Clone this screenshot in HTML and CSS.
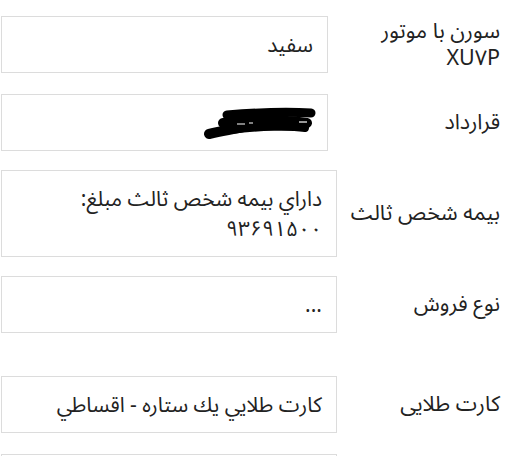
FILE: index.html
```html
<!DOCTYPE html>
<html lang="fa" dir="rtl">
<head>
<meta charset="utf-8">
<link rel="stylesheet" href="styles.css">
</head>
<body>
<div class="list">
  <div class="row">
    <div class="label">سورن با موتور<br>XU۷P</div>
    <div class="box narrow">سفید</div>
  </div>
  <div class="row gap-m">
    <div class="label">قرارداد</div>
    <div class="box narrow">
      <svg class="scribble" width="116" height="36" viewBox="0 0 116 36">
        <path d="M8 29 C30 24 60 19 84 15" stroke="#000" stroke-width="10" stroke-linecap="round" fill="none"/>
        <path d="M26 10 C50 8 80 6 110 8" stroke="#000" stroke-width="9" stroke-linecap="round" fill="none"/>
        <path d="M22 18 C50 16 80 14 106 18" stroke="#000" stroke-width="10" stroke-linecap="round" fill="none"/>
        <path d="M30 25 C60 21 90 21 104 23" stroke="#000" stroke-width="8" stroke-linecap="round" fill="none"/>
        <path d="M36 19 L44 19 M48 18 L52 18" stroke="#fff" stroke-width="1.2"/>
        <path d="M98 17 L106 17" stroke="#fff" stroke-width="1.2"/>
      </svg>
    </div>
  </div>
  <div class="row gap-s">
    <div class="label">بیمه شخص ثالث</div>
    <div class="box tall">داراي بيمه شخص ثالث مبلغ:<br>۹۳۶۹۱۵۰۰</div>
  </div>
  <div class="row gap-s">
    <div class="label">نوع فروش</div>
    <div class="box">...</div>
  </div>
  <div class="row gap-l">
    <div class="label">کارت طلایی</div>
    <div class="box">كارت طلايي يك ستاره - اقساطي</div>
  </div>
  <div class="row gap-m">
    <div class="label"></div>
    <div class="box"></div>
  </div>
</div>
</body>
</html>
```
FILE: styles.css
```css
html, body {
  margin: 0;
  padding: 0;
  background: #fff;
}
body {
  font-family: "Noto Sans Arabic", "DejaVu Sans", sans-serif;
  color: #222;
  width: 523px;
  height: 456px;
  overflow: hidden;
}
.list {
  display: flex;
  flex-direction: column;
  padding-top: 16px;
}
.row {
  display: flex;
  flex-direction: row;
  align-items: center;
}
.gap-s { margin-top: 19px; }
.gap-m { margin-top: 21px; }
.gap-l { margin-top: 43px; }
.label {
  width: 163px;
  padding-right: 23px;
  text-align: right;
  font-size: 21.5px;
  line-height: 27px;
  color: #222;
}
.box {
  width: 306px;
  height: 55px;
  border: 1px solid #dcdcdc;
  padding: 0 14px;
  font-size: 21px;
  line-height: 30px;
  display: flex;
  flex-direction: column;
  justify-content: center;
  text-align: right;
  color: #222;
  box-sizing: content-box;
}
.box.narrow {
  width: 297px;
  margin-right: 9px;
}
.box.tall {
  height: 85px;
}
.scribble {
  align-self: flex-start;
  margin-right: -4px;
}
```
